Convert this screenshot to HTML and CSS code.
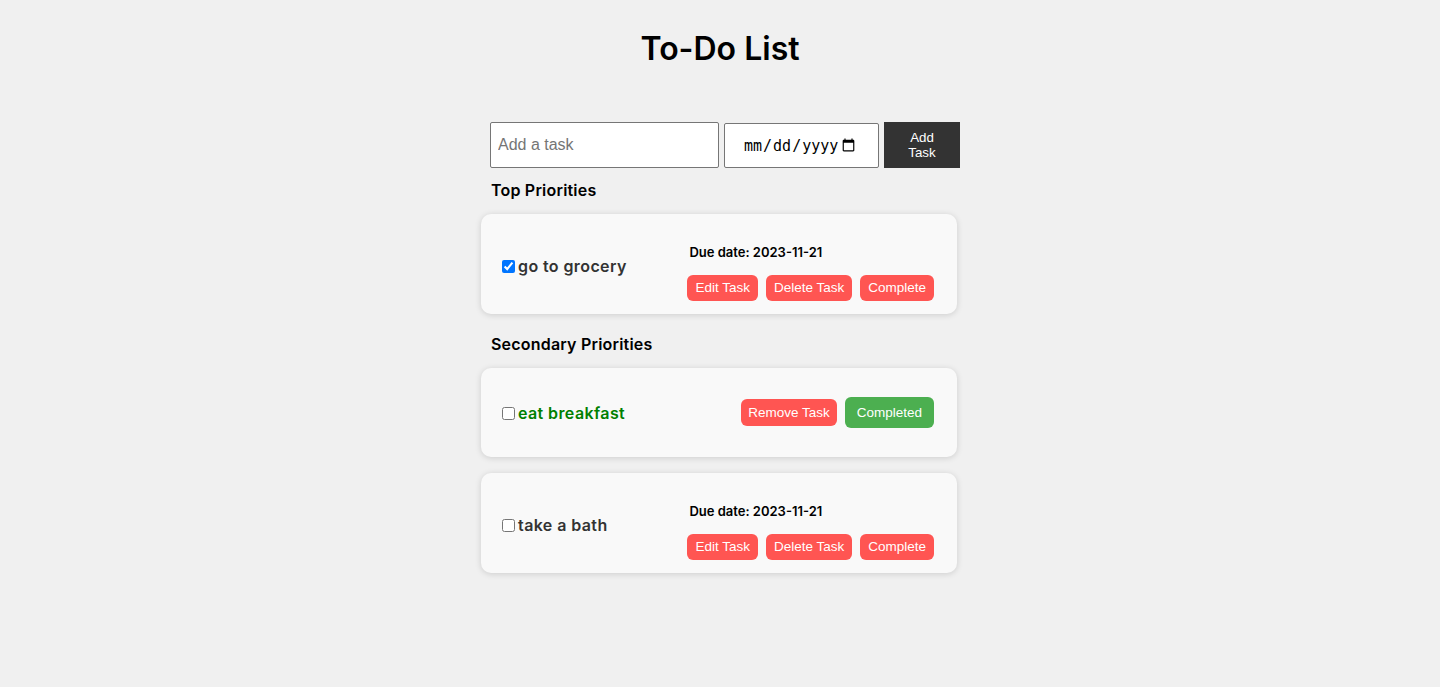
FILE: index.html
```html
<!DOCTYPE html>
<html lang="en">
<head>
<meta charset="utf-8">
<title>To-Do List</title>
<link rel="stylesheet" href="styles.css">
</head>
<body>
<main class="app">
  <h1 class="title">To-Do List</h1>
  <form class="add-form">
    <input class="task-input" type="text" placeholder="Add a task">
    <input class="date-input" type="date">
    <button class="add-btn" type="button">Add Task</button>
  </form>

  <h3 class="section-title">Top Priorities</h3>
  <div class="card card-tall">
    <label class="task-label"><input type="checkbox" checked><span class="task-text">go to grocery</span></label>
    <div class="actions">
      <p class="due">Due date: 2023-11-21</p>
      <div class="btn-row">
        <button class="btn btn-red" type="button">Edit Task</button>
        <button class="btn btn-red" type="button">Delete Task</button>
        <button class="btn btn-red" type="button">Complete</button>
      </div>
    </div>
  </div>

  <h3 class="section-title section-second">Secondary Priorities</h3>
  <div class="card card-short">
    <label class="task-label"><input type="checkbox"><span class="task-text done">eat breakfast</span></label>
    <div class="btn-row">
      <button class="btn btn-red btn-remove" type="button">Remove Task</button>
      <button class="btn btn-green" type="button">Completed</button>
    </div>
  </div>
  <div class="card card-tall">
    <label class="task-label"><input type="checkbox"><span class="task-text">take a bath</span></label>
    <div class="actions">
      <p class="due">Due date: 2023-11-21</p>
      <div class="btn-row">
        <button class="btn btn-red" type="button">Edit Task</button>
        <button class="btn btn-red" type="button">Delete Task</button>
        <button class="btn btn-red" type="button">Complete</button>
      </div>
    </div>
  </div>
</main>
</body>
</html>
```

FILE: styles.css
```css
* { box-sizing: border-box; }

html, body {
  margin: 0;
  padding: 0;
  background: #f0f0f0;
}

body {
  font-family: Inter, "Open Sans", sans-serif;
  color: #000;
}

.app {
  width: 480px;
  margin: 0 auto;
}

.title {
  margin: 25px 0 0;
  line-height: 48px;
  font-size: 32px;
  font-weight: 600;
  text-align: center;
  color: #000;
}

.add-form {
  display: flex;
  align-items: stretch;
  gap: 5px;
  margin: 49px 0 0 10px;
  height: 46px;
}

.task-input {
  width: 229px;
  height: 46px;
  border: 1px solid #767676;
  border-radius: 2px;
  padding: 0 7px;
  font-family: "Liberation Sans", Arial, sans-serif;
  font-size: 16px;
  background: #fff;
  color: #000;
}

.task-input::placeholder { color: #757575; }

.date-input {
  width: 155px;
  height: 45px;
  margin-top: 1px;
  border: 1px solid #767676;
  border-radius: 2px;
  padding: 0 20px 0 18px;
  font-family: "DejaVu Sans Mono", "Liberation Mono", monospace;
  font-size: 15px;
  background: #fff;
  color: #000;
}

.add-btn {
  width: 76px;
  height: 46px;
  border: none;
  padding: 0 14px;
  background: #333;
  color: #fff;
  font-family: "Liberation Sans", Arial, sans-serif;
  font-size: 13.33px;
  line-height: 15px;
}

.section-title {
  margin: 10px 0 12px 11px;
  font-size: 16px;
  line-height: 24px;
  font-weight: 600;
  letter-spacing: 0.2px;
  color: #000;
}

.section-second { margin-top: 18px; }

.card {
  width: 476px;
  margin: 0 0 16px 1px;
  padding: 0 23px 0 17px;
  display: flex;
  align-items: center;
  justify-content: space-between;
  background: #f9f9f9;
  border-radius: 10px;
  box-shadow: 0 1px 6px rgba(0, 0, 0, 0.15);
}

.card-tall { height: 100px; }
.card-short { height: 89px; }

.task-label {
  display: flex;
  align-items: center;
  padding-top: 4px;
  font-size: 16px;
  font-weight: 600;
  letter-spacing: 0.4px;
  color: #333;
}

.card-short .task-label { padding-top: 1px; }

.task-label input {
  width: 13px;
  height: 13px;
  margin: 3px 3px 3px 4px;
}

.task-text.done { color: #008000; }

.actions {
  padding-top: 15px;
}

.due {
  margin: 0 0 13px 2px;
  font-size: 13px;
  line-height: 20px;
  font-weight: 600;
  color: #000;
}

.btn-row {
  display: flex;
  align-items: center;
  gap: 8px;
}

.btn {
  border: none;
  border-radius: 6px;
  padding: 5px 8px;
  font-family: "Liberation Sans", Arial, sans-serif;
  font-size: 13.5px;
  line-height: 16px;
  color: #fff;
}

.btn-red { background: #ff5552; }
.btn-remove { padding: 6px 7px; line-height: 15px; }
.btn-green {
  background: #4caf50;
  padding: 8px 12px;
  line-height: 15px;
}
```
